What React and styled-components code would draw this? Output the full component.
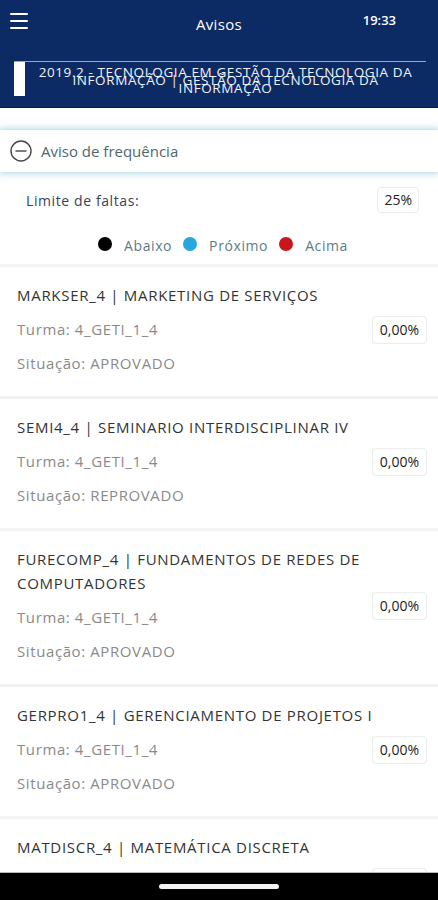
import React from 'react';
import styled, { createGlobalStyle } from 'styled-components';

const GlobalStyle = createGlobalStyle`
  html, body {
    margin: 0;
    padding: 0;
    background: #fff;
  }
  body {
    font-family: "Open Sans", "Noto Sans", sans-serif;
  }
`;

const Page = styled.div`
  width: 438px;
  height: 900px;
  display: flex;
  flex-direction: column;
  overflow: hidden;
  background: #fff;
`;

const Header = styled.header`
  background: #0c2a63;
  height: 107px;
  border-bottom: 1px solid #061a45;
  display: flex;
  flex-direction: column;
  color: #fff;
  flex: none;
`;

const TopBar = styled.div`
  height: 48px;
  display: grid;
  grid-template-columns: 1fr auto 1fr;
  align-items: start;
  padding: 0 10px;
`;

const MenuButton = styled.div`
  display: flex;
  flex-direction: column;
  gap: 5px;
  width: 18px;
  padding-top: 13px;
  span {
    height: 2px;
    background: #fff;
    border-radius: 1px;
  }
`;

const Title = styled.div`
  font-size: 15px;
  letter-spacing: 0.3px;
  padding-top: 14px;
`;

const Clock = styled.div`
  justify-self: end;
  font-size: 13px;
  font-weight: 600;
  padding-top: 11px;
  padding-right: 32px;
`;

const Banner = styled.div`
  margin: 13px 12px 0 14px;
  border-top: 1px solid #9aa6bd;
  display: flex;
  align-items: stretch;
  height: 34px;
`;

const BannerMark = styled.div`
  width: 11px;
  background: #fff;
  flex: none;
`;

const BannerText = styled.div`
  flex: 1;
  text-align: center;
  font-size: 13.5px;
  line-height: 8px;
  padding: 6px 8px 0;
  letter-spacing: 0.6px;
  color: #f2f4f8;
`;

const Accordion = styled.div`
  margin-top: 22px;
  height: 42px;
  display: flex;
  align-items: center;
  gap: 9px;
  padding-left: 10px;
  background: #fff;
  box-shadow: 0 0 7px 1px rgba(90, 175, 195, 0.55);
  color: #4e6870;
  font-size: 15px;
`;

const LimitRow = styled.div`
  margin-top: 15px;
  display: flex;
  align-items: center;
  justify-content: space-between;
  padding: 0 19px 0 26px;
  color: #3a4258;
  font-size: 14px;
  letter-spacing: 0.6px;
`;

const Pill = styled.div`
  border: 1px solid #ececec;
  border-radius: 4px;
  padding: 0 ${({ $px }) => $px || 6}px;
  height: ${({ $h }) => $h || 24}px;
  line-height: ${({ $h }) => $h || 24}px;
  font-size: 14px;
  letter-spacing: 0;
  color: #222;
  flex: none;
`;

const Legend = styled.div`
  margin-top: 20px;
  display: flex;
  justify-content: center;
  align-items: center;
  gap: 11px;
  padding-left: 8px;
  height: 24px;
  font-size: 14px;
  letter-spacing: 0.6px;
  color: #5c7c86;
`;

const LegendItem = styled.div`
  display: flex;
  align-items: center;
  gap: 12px;
`;

const Dot = styled.span`
  width: 14px;
  height: 14px;
  border-radius: 50%;
  background: ${({ $c }) => $c};
  margin-top: -2px;
`;

const List = styled.div`
  margin-top: 7px;
  display: flex;
  flex-direction: column;
`;

const Card = styled.div`
  border-top: 3px solid #f2f2f2;
  padding: 16px 11px 21px 17px;
  display: grid;
  grid-template-columns: 1fr auto;
  row-gap: 10px;
`;

const CardTitle = styled.div`
  grid-column: 1 / 3;
  grid-row: 1;
  font-size: 15px;
  letter-spacing: 0.7px;
  line-height: 24px;
  color: #333;
`;

const CardLine = styled.div`
  grid-column: 1;
  font-size: 15px;
  letter-spacing: 0.6px;
  line-height: 24px;
  color: #8a8a8a;
`;

const CardBadge = styled(Pill)`
  grid-column: 2;
  grid-row: 1 / 4;
  align-self: center;
  margin-top: 2px;
`;

const BottomBar = styled.div`
  margin-top: auto;
  height: 27px;
  flex: none;
  background: #000;
  border-top: 1px solid #bbb;
  display: flex;
  justify-content: center;
  align-items: center;
  span {
    width: 120px;
    height: 5px;
    border-radius: 3px;
    background: #f2f2f2;
  }
`;

const Scroll = styled.div`
  flex: 1;
  overflow: hidden;
`;

const MinusCircle = () => (
  <svg width="22" height="22" viewBox="0 0 22 22" fill="none">
    <circle cx="11" cy="11" r="10" stroke="#444" strokeWidth="1.4" />
    <line x1="5.5" y1="11" x2="16.5" y2="11" stroke="#444" strokeWidth="1.4" />
  </svg>
);

const subjects = [
  { code: 'MARKSER_4', name: 'MARKETING DE SERVIÇOS', status: 'APROVADO' },
  { code: 'SEMI4_4', name: 'SEMINARIO INTERDISCIPLINAR IV', status: 'REPROVADO' },
  { code: 'FURECOMP_4', name: 'FUNDAMENTOS DE REDES DE COMPUTADORES', status: 'APROVADO' },
  { code: 'GERPRO1_4', name: 'GERENCIAMENTO DE PROJETOS I', status: 'APROVADO' },
  { code: 'MATDISCR_4', name: 'MATEMÁTICA DISCRETA', status: 'APROVADO' },
];

const App = () => (
  <Page>
    <GlobalStyle />
    <Header>
      <TopBar>
        <MenuButton>
          <span />
          <span />
          <span />
        </MenuButton>
        <Title>Avisos</Title>
        <Clock>19:33</Clock>
      </TopBar>
      <Banner>
        <BannerMark />
        <BannerText>
          2019.2 - TECNOLOGIA EM GESTÃO DA TECNOLOGIA DA INFORMAÇÃO | GESTÃO DA TECNOLOGIA DA INFORMAÇÃO
        </BannerText>
      </Banner>
    </Header>
    <Scroll>
      <Accordion>
        <MinusCircle />
        Aviso de frequência
      </Accordion>
      <LimitRow>
        <span>Limite de faltas:</span>
        <Pill>25%</Pill>
      </LimitRow>
      <Legend>
        <LegendItem><Dot $c="#000" />Abaixo</LegendItem>
        <LegendItem><Dot $c="#27a6e0" />Próximo</LegendItem>
        <LegendItem><Dot $c="#c8161d" />Acima</LegendItem>
      </Legend>
      <List>
        {subjects.map((s) => (
          <Card key={s.code}>
            <CardTitle>{s.code} | {s.name}</CardTitle>
            <CardLine>Turma: 4_GETI_1_4</CardLine>
            <CardLine>Situação: {s.status}</CardLine>
            <CardBadge $h={26} $px={7}>0,00%</CardBadge>
          </Card>
        ))}
      </List>
    </Scroll>
    <BottomBar>
      <span />
    </BottomBar>
  </Page>
);

export default App;
